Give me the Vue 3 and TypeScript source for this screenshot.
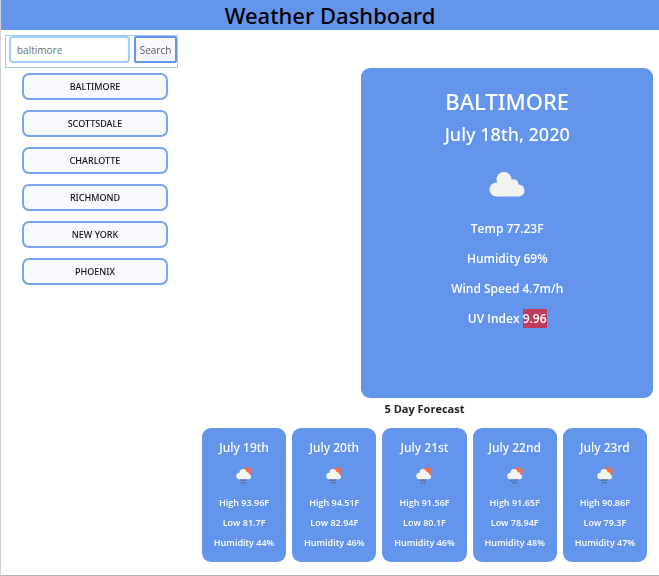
<script setup lang="ts">
import { ref } from 'vue'

interface ForecastDay {
  date: string
  high: string
  low: string
  humidity: string
}

const query = ref<string>('baltimore')
const selected = ref<string>('BALTIMORE')
const cities = ref<string[]>(['BALTIMORE', 'SCOTTSDALE', 'CHARLOTTE', 'RICHMOND', 'NEW YORK', 'PHOENIX'])

const forecast: ForecastDay[] = [
  { date: 'July 19th', high: '93.96F', low: '81.7F', humidity: '44%' },
  { date: 'July 20th', high: '94.51F', low: '82.94F', humidity: '46%' },
  { date: 'July 21st', high: '91.56F', low: '80.1F', humidity: '46%' },
  { date: 'July 22nd', high: '91.65F', low: '78.94F', humidity: '48%' },
  { date: 'July 23rd', high: '90.86F', low: '79.3F', humidity: '47%' },
]

function search(): void {
  const city = query.value.trim().toUpperCase()
  if (!city) return
  selected.value = city
  if (!cities.value.includes(city)) cities.value.push(city)
}
</script>

<template>
  <div class="page">
    <header class="banner">
      <h1>Weather Dashboard</h1>
    </header>

    <div class="columns">
      <aside class="sidebar">
        <form class="search" @submit.prevent="search">
          <input v-model="query" class="search-input" type="text" aria-label="City" autofocus />
          <button class="search-button" type="submit">Search</button>
        </form>
        <div class="cities">
          <button v-for="city in cities" :key="city" class="city" type="button" @click="selected = city">
            {{ city }}
          </button>
        </div>
      </aside>

      <section class="current">
        <h2>{{ selected }}</h2>
        <h3>July 18th, 2020</h3>
        <svg class="cloud" viewBox="0 0 36 26" fill="#f2f2f0" aria-hidden="true">
          <circle cx="7.500" cy="18.500" r="7" />
          <circle cx="15" cy="8.500" r="7.500" />
          <circle cx="24.500" cy="13.300" r="5" />
          <circle cx="29.500" cy="19.500" r="6" />
          <path d="M7.500 12L15 8l10 5 5 3v9.500H7.500z" />
        </svg>
        <p>Temp 77.23F</p>
        <p>Humidity 69%</p>
        <p>Wind Speed 4.7m/h</p>
        <p>UV Index <span class="uv">9.96</span></p>
      </section>
    </div>

    <section class="forecast">
      <h4>5 Day Forecast</h4>
      <div class="days">
        <article v-for="day in forecast" :key="day.date" class="day">
          <h5>{{ day.date }}</h5>
          <svg class="rain" viewBox="0 0 16 18" aria-hidden="true">
            <circle cx="11.300" cy="4.800" r="4.500" fill="#ec6e4c" />
            <g fill="#f4f4f4">
              <circle cx="3.600" cy="9" r="3.300" />
              <circle cx="7" cy="5.500" r="3.500" />
              <circle cx="10.700" cy="7.500" r="2.500" />
              <circle cx="12.500" cy="9.800" r="2.500" />
              <path d="M3.600 6L7 5l4 1 1.500 2v4.300H3.600z" />
            </g>
            <path
              d="M5 12.300l-1 1.600M7.400 12.300l-1 1.600M9.800 12.300l-1 1.600M6.500 15l-.9 1.500M9.200 15l-.9 1.500"
              stroke="#48484a"
              stroke-width="1"
              fill="none"
            />
          </svg>
          <p>High {{ day.high }}</p>
          <p>Low {{ day.low }}</p>
          <p>Humidity {{ day.humidity }}</p>
        </article>
      </div>
    </section>
  </div>
</template>

<style>
body {
  margin: 0;
  background: #fff;
}
</style>

<style scoped>
.page {
  box-sizing: border-box;
  min-height: 100vh;
  border-left: 1px solid #d4d4d4;
  border-bottom: 1px solid #b4b4b4;
  font-family: 'Noto Sans', 'Open Sans', sans-serif;
  color: #212529;
}

h1,
h2,
h3,
h4,
h5,
p {
  margin: 0;
}

.banner {
  background: #6495ed;
  color: #000;
  text-align: center;
}

h1 {
  font-size: 22px;
  line-height: 30px;
  font-weight: 500;
}

.columns {
  display: flex;
  justify-content: space-between;
  padding: 5px 6px 0 4px;
}

.sidebar {
  width: 173px;
}

.search {
  box-sizing: border-box;
  display: flex;
  align-items: flex-start;
  gap: 4px;
  height: 33px;
  padding-left: 3px;
  border: 1px solid #a9c7f5;
}

.search-input {
  box-sizing: border-box;
  flex: 1;
  min-width: 0;
  height: 27px;
  padding: 0 6px;
  border: 2px solid #a3cfff;
  border-radius: 4px;
  outline: none;
  background: #fff;
  color: #6c7075;
  font: 400 10px/20px 'Open Sans', 'Noto Sans', sans-serif;
}

.search-button {
  box-sizing: border-box;
  width: 43px;
  height: 27px;
  padding: 0;
  border: 2px solid #6495ed;
  border-radius: 2px;
  background: #f8f8ff;
  color: #55585c;
  font: 400 10px/20px 'Open Sans', 'Noto Sans', sans-serif;
}

.cities {
  display: flex;
  flex-direction: column;
  gap: 10px;
  padding: 5px 10px 0 17px;
}

.city {
  box-sizing: border-box;
  height: 27px;
  padding: 1px 0 0;
  border: 2px solid #78a4f0;
  border-radius: 7px;
  background: #f8f8ff;
  color: #111;
  font: 500 9px/20px 'Noto Sans', sans-serif;
}

.current {
  box-sizing: border-box;
  width: 45%;
  min-height: 330px;
  margin-top: 33px;
  padding-top: 16px;
  border-radius: 9px;
  background: #6495ed;
  color: #fff;
  text-align: center;
}

h2 {
  font-size: 22px;
  line-height: 34px;
  font-weight: 500;
}

h3 {
  font-size: 18px;
  line-height: 32px;
  font-weight: 500;
}

.cloud {
  display: block;
  width: 36px;
  height: 26px;
  margin: 21px auto 17px;
}

.current p {
  font-family: 'Open Sans', sans-serif;
  font-size: 12px;
  line-height: 30px;
  font-weight: 600;
}

.uv {
  padding: 1px 0;
  background: #c03a5b;
}

.forecast {
  padding: 0 12px 13px 201px;
}

h4 {
  font-family: 'Open Sans', sans-serif;
  font-size: 11px;
  line-height: 22px;
  font-weight: 700;
  text-align: center;
}

.days {
  display: grid;
  grid-template-columns: repeat(5, 1fr);
  gap: 6px;
  margin-top: 8px;
}

.day {
  padding: 10px 0 9px;
  border-radius: 9px;
  background: #6495ed;
  color: #fff;
  text-align: center;
}

h5 {
  font-size: 12px;
  line-height: 20px;
  font-weight: 500;
}

.rain {
  display: block;
  width: 16px;
  height: 18px;
  margin: 9px auto 8px;
}

.day p {
  font-family: 'Open Sans', sans-serif;
  font-size: 9px;
  line-height: 20px;
  font-weight: 600;
}
</style>
